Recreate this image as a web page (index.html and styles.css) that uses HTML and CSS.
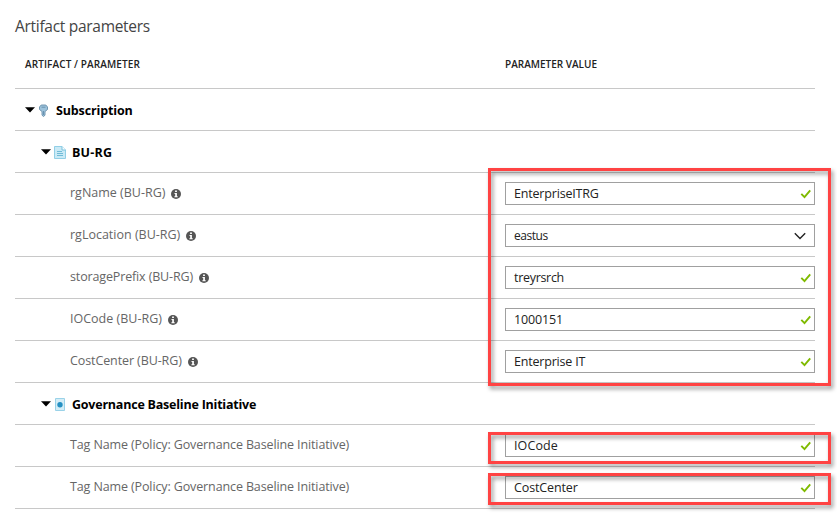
FILE: index.html
```html
<!DOCTYPE html>
<html lang="en">
<head>
<meta charset="utf-8">
<title>Artifact parameters</title>
<link rel="stylesheet" href="styles.css">
</head>
<body>
<svg class="defs" aria-hidden="true">
  <symbol id="caret" viewBox="0 0 10 6"><path d="M0 .3h10L5 5.4z"/></symbol>
  <symbol id="info" viewBox="0 0 10 10"><circle cx="5" cy="5" r="5" fill="#555"/><path d="M4.1 1.6h1.8v1.5H4.1zM3.5 4h2.4v3.2h.8v1H3.4v-1h.8V5h-.7z" fill="#fff"/></symbol>
  <symbol id="check" viewBox="0 0 12 10"><path d="M1.3 4.8l3.2 3.3L10.2 1.3" fill="none" stroke="#7fba00" stroke-width="1.9"/></symbol>
  <symbol id="chevron" viewBox="0 0 12 8"><path d="M.8 1.2L6 6.4l5.200-5.200" fill="none" stroke="#222" stroke-width="1.4"/></symbol>
</svg>
<main class="panel">
  <h1>Artifact parameters</h1>
  <div class="table">
    <div class="row head"><span class="c1">ARTIFACT / PARAMETER</span><span class="c2">PARAMETER VALUE</span></div>
    <div class="row group"><svg class="caret"><use href="#caret"/></svg>
      <svg class="key" viewBox="0 0 9 13"><path d="M2.200 1h4.600L8.500 3v2.500L6 7.500v3.700L4.500 12.500 3 11.200V7.500L.5 5.500V3z" fill="#9dc3dc" stroke="#668da9" stroke-width=".9"/><path d="M2.500 3.200h4M4.500 7v4" stroke="#5c87a5" stroke-width=".8"/></svg>
      <span class="t-sub">Subscription</span></div>
    <div class="row group nested"><svg class="caret"><use href="#caret"/></svg>
      <svg class="doc" viewBox="0 0 12 13"><path d="M.5.5h7.500l3.500 3.500v8.500H.5z" fill="#caeaf6" stroke="#92cfe6"/><path d="M8 .5V4h3.500" fill="#fff" stroke="#78c2de"/><path d="M3 5.500h5M3 7.500h6M3 9.500h6" stroke="#65b5d4" stroke-width=".9"/></svg>
      <span class="t-burg">BU-RG</span></div>
    <div class="row"><label class="c1"><span class="t-name">rgName (BU-RG)</span><svg class="info"><use href="#info"/></svg></label><div class="field"><span class="v-ent">EnterpriseITRG</span><svg class="check"><use href="#check"/></svg></div></div>
    <div class="row"><label class="c1"><span class="t-loc">rgLocation (BU-RG)</span><svg class="info"><use href="#info"/></svg></label><div class="field"><span class="v-east">eastus</span><svg class="chevron"><use href="#chevron"/></svg></div></div>
    <div class="row"><label class="c1"><span class="t-sto">storagePrefix (BU-RG)</span><svg class="info"><use href="#info"/></svg></label><div class="field"><span class="v-trey">treyrsrch</span><svg class="check"><use href="#check"/></svg></div></div>
    <div class="row"><label class="c1"><span class="t-io">IOCode (BU-RG)</span><svg class="info"><use href="#info"/></svg></label><div class="field"><span class="v-num">1000151</span><svg class="check"><use href="#check"/></svg></div></div>
    <div class="row"><label class="c1"><span class="t-cost">CostCenter (BU-RG)</span><svg class="info"><use href="#info"/></svg></label><div class="field"><span class="v-eit">Enterprise IT</span><svg class="check"><use href="#check"/></svg></div></div>
    <div class="row group nested"><svg class="caret"><use href="#caret"/></svg>
      <svg class="doc policy" viewBox="0 0 12 13"><path d="M1.500.5h9v12h-9z" fill="#d3edf7" stroke="#9ad2e8"/><circle cx="6" cy="6.700" r="2.700" fill="#2590c3"/></svg>
      <span class="t-gov">Governance Baseline Initiative</span></div>
    <div class="row"><label class="c1"><span class="t-tag">Tag Name (Policy: Governance Baseline Initiative)</span></label><div class="field"><span class="v-io">IOCode</span><svg class="check"><use href="#check"/></svg></div></div>
    <div class="row"><label class="c1"><span class="t-tag">Tag Name (Policy: Governance Baseline Initiative)</span></label><div class="field"><span class="v-cost">CostCenter</span><svg class="check"><use href="#check"/></svg></div></div>
  </div>
</main>
<div class="mark mark-values"></div>
<div class="mark mark-code"></div>
<div class="mark mark-center"></div>
</body>
</html>
```
FILE: styles.css
```css
* { box-sizing: border-box; }
body { margin: 0; height: 519px; position: relative; overflow: hidden; background: #fff; color: #000; font: 12.5px/20px "Open Sans", "Noto Sans", sans-serif; }
.defs { position: absolute; width: 0; height: 0; }
.panel { width: 800px; margin-left: 15px; padding-top: 14px; }
h1 { margin: 0; height: 26px; font-size: 15.5px; line-height: 24px; font-weight: 400; color: #444; letter-spacing: -.29px; white-space: nowrap; }
svg { display: block; flex: none; }
span { white-space: nowrap; }
.row { height: 42px; border-bottom: 1px solid #c8c8c8; display: grid; grid-template-columns: 490px 310px; align-items: center; }
.head { height: 49px; font-size: 10px; font-weight: 600; color: #222; }
.head .c1 { padding-left: 10px; letter-spacing: .1px; }
.row label { display: flex; align-items: center; padding: 0 0 2px 55px; color: #666; }
.group { display: flex; padding-left: 10px; font-weight: 700; }
.group span { padding-top: 2px; }
.nested { padding-left: 26px; }
.caret { width: 10px; height: 6px; margin-right: 4px; }
.key { width: 9px; height: 13px; margin: 2px 8px 0 0; }
.nested .caret { margin-right: 3px; }
.doc { width: 12px; height: 13px; margin: 2px 6px 0 0; }
.info { width: 10px; height: 10px; margin: 3px 0 0 6px; }
.field { height: 23px; margin-top: -1px; border: 1px solid #a0a0a0; padding: 0 3px 0 8px; display: flex; align-items: center; justify-content: space-between; color: #222; }
.field span { padding-top: 2px; }
.check { width: 12px; height: 10px; margin-top: 2px; margin-right: -1px; }
.chevron { width: 12px; height: 8px; margin: 2px 5px 0 0; }
.t-sub { letter-spacing: -.13px; }
.t-burg { letter-spacing: .2px; }
.t-gov { letter-spacing: -.22px; }
.t-tag { letter-spacing: -.12px; }
.t-sto { letter-spacing: -.14px; }
.t-cost { letter-spacing: -.1px; }
.v-ent { letter-spacing: -.18px; }
.v-east { font-size: 12px; letter-spacing: -.45px; }
.v-trey { letter-spacing: -.3px; }
.v-num { letter-spacing: -.15px; }
.v-eit { letter-spacing: -.2px; }
.v-io { letter-spacing: .1px; }
.v-cost { letter-spacing: -.12px; }
.mark { position: absolute; left: 488px; width: 343px; height: 32px; border: 3px solid #ff4343; filter: drop-shadow(2px 3px 2px rgba(0,0,0,.42)); }
.mark-values { top: 168px; height: 218px; }
.mark-code { top: 432px; }
.mark-center { top: 473px; }
```
